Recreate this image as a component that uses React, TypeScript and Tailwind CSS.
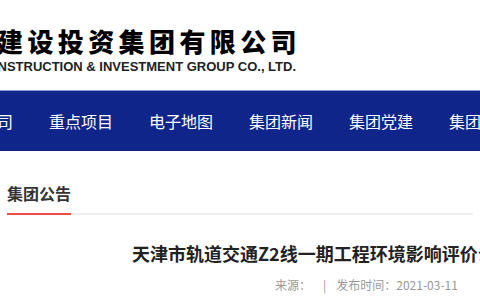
const navItems = ["集团公司", "重点项目", "电子地图", "集团新闻", "集团党建", "集团公告"];

export default function App() {
  return (
    <div className="h-[300px] w-[480px] overflow-hidden bg-white font-['Noto_Sans_CJK_SC',sans-serif]">
      <div className="h-[90px] overflow-hidden">
        <div className="ml-[-3px] mt-[27px] whitespace-nowrap text-[26px] font-black leading-[28px] tracking-[4.4px] text-black">
          建设投资集团有限公司
        </div>
        <div className="ml-[-22px] mt-[5px] whitespace-nowrap font-['Liberation_Sans',sans-serif] text-[13px] font-bold leading-[14px] text-[#222]">
          CONSTRUCTION &amp; INVESTMENT GROUP CO., LTD.
        </div>
      </div>

      <nav className="flex h-[61px] items-center overflow-hidden border-t border-[#8c9bd4] bg-[#0f258a]">
        <div className="ml-[-51px] flex shrink-0 gap-[36px]">
          {navItems.map((item) => (
            <span className="shrink-0 whitespace-nowrap text-[16px] font-normal text-white" key={item}>
              {item}
            </span>
          ))}
        </div>
      </nav>

      <div className="px-[7px] pt-[28px]">
        <div className="text-[16px] font-bold leading-[28px] text-[#333]">集团公告</div>
        <div className="mt-[6px] flex h-[2px] bg-[#f0f0f0]">
          <div className="w-[64px] bg-[#ef4b4b]" />
        </div>
      </div>

      <div className="mt-[26px] whitespace-nowrap pl-[132px] text-[18px] font-bold leading-[24px] text-[#222]">
        天津市轨道交通Z2线一期工程环境影响评价公示
      </div>
      <div className="mt-[11px] flex items-center whitespace-nowrap pl-[275px] text-[12px] leading-[18px] text-[#999]">
        <span>来源：</span>
        <span className="ml-[12px]">|</span>
        <span className="ml-[10px]">发布时间：2021-03-11</span>
      </div>
    </div>
  );
}
